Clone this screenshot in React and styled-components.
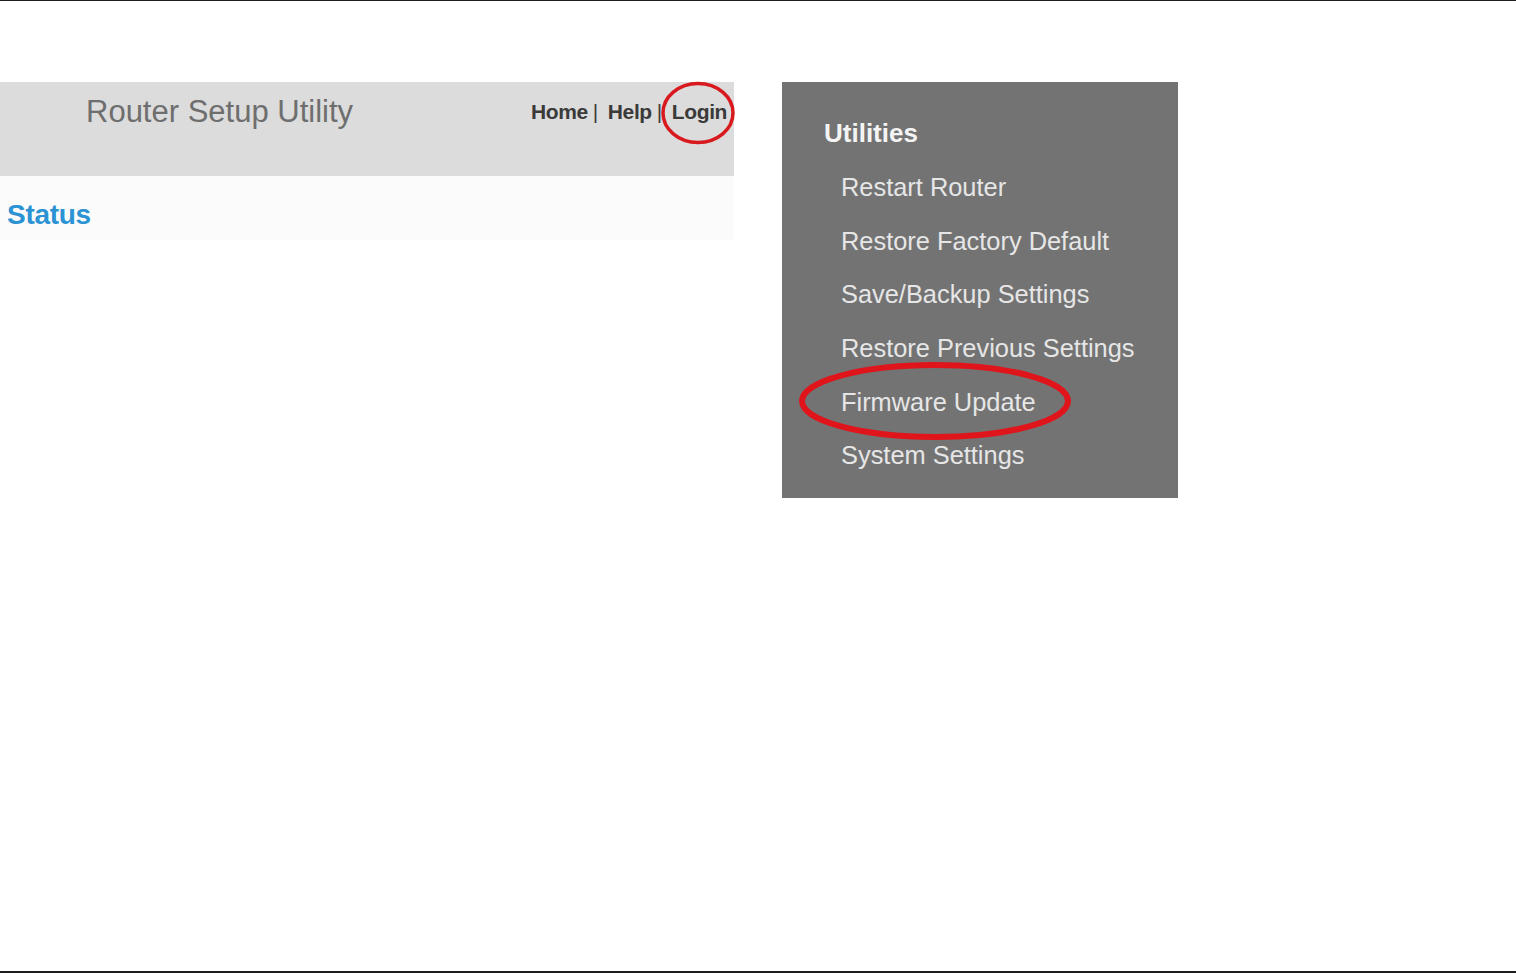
import React from 'react'
import styled, { createGlobalStyle } from 'styled-components'

const GlobalStyle = createGlobalStyle`
  html, body {
    margin: 0;
    padding: 0;
    background: #ffffff;
    font-family: "Liberation Sans", Arial, sans-serif;
  }
`

const utilities = [
  'Restart Router',
  'Restore Factory Default',
  'Save/Backup Settings',
  'Restore Previous Settings',
  'Firmware Update',
  'System Settings',
]

export default function App () {
  return (
    <Page>
      <GlobalStyle />
      <Shots>
        <RouterShot>
          <Header>
            <Title>Router Setup Utility</Title>
            <Links>
              <Link>Home</Link>
              <Sep>|</Sep>
              <Link>Help</Link>
              <Sep>|</Sep>
              <Link>Login</Link>
            </Links>
            <LoginMark viewBox='0 0 76 66'>
              <ellipse cx='38' cy='33' rx='35' ry='29.5' fill='none' stroke='#d8191e' strokeWidth='3.5' />
            </LoginMark>
          </Header>
          <StatusBar>
            <Status>Status</Status>
          </StatusBar>
        </RouterShot>

        <Menu>
          <MenuTitle>Utilities</MenuTitle>
          {utilities.map(item => (
            <MenuItem key={item}>{item}</MenuItem>
          ))}
          <FirmwareMark viewBox='0 0 276 82'>
            <ellipse cx='138' cy='41' rx='133' ry='36' fill='none' stroke='#e0141b' strokeWidth='6' />
          </FirmwareMark>
        </Menu>
      </Shots>
    </Page>
  )
}

const Page = styled.div`
  box-sizing: border-box;
  height: 973px;
  border-top: 1px solid #1e1e1e;
  border-bottom: 2px solid #1e1e1e;
  padding-top: 81px;
`

const Shots = styled.div`
  display: flex;
  align-items: flex-start;
  gap: 48px;
`

const RouterShot = styled.div`
  width: 734px;
  display: flex;
  flex-direction: column;
`

const Header = styled.div`
  position: relative;
  height: 94px;
  background: #dcdcdc;
  display: flex;
  justify-content: space-between;
  align-items: flex-start;
  padding: 14px 7px 0 86px;
  box-sizing: border-box;
`

const Title = styled.div`
  font-size: 31px;
  line-height: 32px;
  color: #6e6e6e;
`

const Links = styled.div`
  display: flex;
  align-items: center;
  height: 32px;
  font-size: 21px;
  font-weight: bold;
  color: #3a3a3a;
  letter-spacing: -0.4px;
`

const Link = styled.span``

const Sep = styled.span`
  font-weight: normal;
  margin: 0 10px 0 5px;
`

const LoginMark = styled.svg`
  position: absolute;
  right: -2px;
  top: -2px;
  width: 76px;
  height: 66px;
`

const StatusBar = styled.div`
  height: 64px;
  background: #fbfbfb;
  padding: 23px 0 0 7px;
  box-sizing: border-box;
`

const Status = styled.div`
  font-size: 28px;
  line-height: 32px;
  font-weight: bold;
  color: #2b93d4;
  letter-spacing: -0.3px;
`

const Menu = styled.div`
  position: relative;
  width: 396px;
  height: 416px;
  box-sizing: border-box;
  background: #737373;
  padding: 24px 0 0 42px;
  display: flex;
  flex-direction: column;
`

const MenuTitle = styled.div`
  height: 54px;
  line-height: 54px;
  font-size: 26px;
  font-weight: bold;
  color: #f4f4f4;
`

const MenuItem = styled.div`
  height: 53.7px;
  line-height: 54px;
  padding-left: 17px;
  font-size: 25.4px;
  color: #e6e6e6;
  white-space: nowrap;
`

const FirmwareMark = styled.svg`
  position: absolute;
  left: 15px;
  top: 278px;
  width: 276px;
  height: 82px;
`
